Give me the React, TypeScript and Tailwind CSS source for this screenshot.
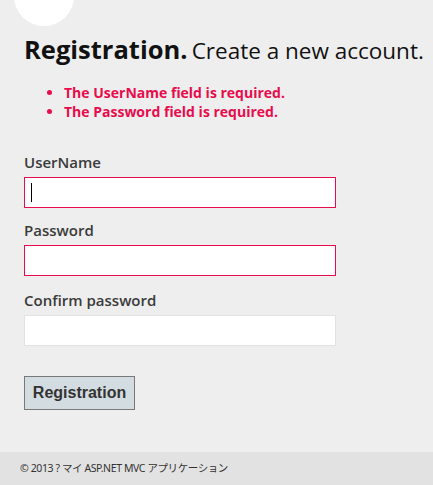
import React from "react";

const font = { fontFamily: '"Open Sans", "Noto Sans", sans-serif' };

export default function App() {
  return (
    <div className="relative w-[433px] h-[485px] overflow-hidden bg-[#eeeeee] flex flex-col" style={font}>
      {/* logo circle peeking from the top */}
      <div className="absolute left-[14px] top-[-34px] w-[60px] h-[60px] rounded-full bg-white" />

      <main className="flex-1 pl-[24px] pt-[34px]">
        <h1 className="text-[#111] leading-[30px] whitespace-nowrap">
          <span className="font-bold text-[25.5px]">Registration.</span>{" "}
          <span className="text-[22.5px]">Create a new account.</span>
        </h1>

        <ul className="mt-[15px] pl-[40px] list-disc text-[#e80c4d] font-bold text-[14px] leading-[19px]">
          <li>The UserName field is required.</li>
          <li>The Password field is required.</li>
        </ul>

        <form className="mt-[31px] flex flex-col" onSubmit={(e) => e.preventDefault()}>
          <label className="text-[15px] font-semibold text-[#3a3a3a] leading-[20px]">UserName</label>
          <div className="mt-[5px] w-[312px] h-[31px] bg-white border border-[#e80c4d] flex items-center pl-[6px]">
            <span className="w-px h-[19px] bg-black" />
          </div>

          <label className="mt-[12px] text-[15px] font-semibold text-[#3a3a3a] leading-[20px]">Password</label>
          <input
            type="password"
            className="mt-[5px] w-[312px] h-[31px] bg-white border border-[#e80c4d] outline-none"
          />

          <label className="mt-[14px] text-[15px] font-semibold text-[#3a3a3a] leading-[20px]">Confirm password</label>
          <input
            type="password"
            className="mt-[5px] w-[312px] h-[31px] bg-white border border-[#e2e2e2] outline-none"
          />

          <button
            type="submit"
            className="mt-[30px] w-[111px] h-[34px] bg-[#d3dce0] border border-[#787878] text-[#333] font-bold text-[16px]"
            style={{ fontFamily: '"Liberation Sans", Arial, sans-serif' }}
          >
            Registration
          </button>
        </form>
      </main>

      <footer
        className="h-[33px] bg-[#e2e2e2] flex items-center pl-[20px] text-[10.5px] text-[#333] tracking-[-0.4px]"
        style={{ fontFamily: '"Noto Sans", "Noto Sans CJK JP", sans-serif' }}
      >
        © 2013 ? マイ ASP.NET MVC アプリケーション
      </footer>
    </div>
  );
}
